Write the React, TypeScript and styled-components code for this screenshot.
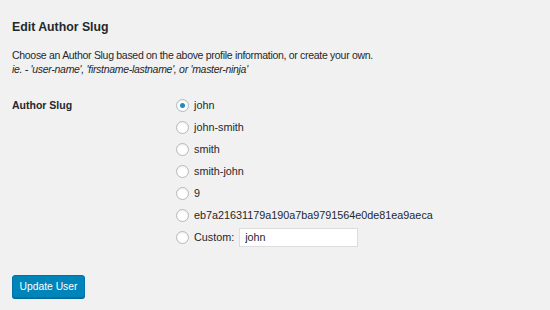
import React, { useState } from "react";
import styled, { createGlobalStyle } from "styled-components";

const GlobalStyle = createGlobalStyle`
  body {
    margin: 0;
    background: #f1f1f1;
    font-family: "Liberation Sans", Arial, sans-serif;
    color: #23282d;
  }
`;

const Page = styled.div`
  width: 550px;
  height: 310px;
  box-sizing: border-box;
  padding: 18px 12px 0;
`;

const Heading = styled.h2`
  margin: 0 0 12px;
  font-size: 12.3px;
  line-height: 18px;
  font-weight: 700;
`;

const Description = styled.p<{ $italic?: boolean }>`
  margin: 0;
  font-size: 10.5px;
  line-height: 14px;
  letter-spacing: -0.3px;
  font-style: ${({ $italic }) => ($italic ? "italic" : "normal")};
`;

const FieldRow = styled.div`
  display: grid;
  grid-template-columns: 164px 1fr;
  margin-top: 18px;
`;

const Label = styled.div`
  font-size: 10.5px;
  font-weight: 700;
  line-height: 22px;
`;

const Options = styled.div`
  display: flex;
  flex-direction: column;
`;

const Option = styled.label`
  display: flex;
  align-items: center;
  height: 22px;
  font-size: 10.8px;
  cursor: pointer;
`;

const Radio = styled.span<{ $checked: boolean }>`
  box-sizing: border-box;
  flex: none;
  width: 13px;
  height: 13px;
  margin-right: 5px;
  border: 1px solid #b4b9be;
  border-radius: 50%;
  background: #fff;
  box-shadow: inset 0 1px 2px rgba(0, 0, 0, 0.07);
  display: flex;
  align-items: center;
  justify-content: center;

  &::after {
    content: "";
    width: 5px;
    height: 5px;
    border-radius: 50%;
    background: #1e8cbe;
    display: ${({ $checked }) => ($checked ? "block" : "none")};
  }
`;

const CustomInput = styled.input`
  box-sizing: border-box;
  width: 119px;
  height: 19px;
  margin-left: 5px;
  padding: 0 5px;
  border: 1px solid #ddd;
  background: #fff;
  font-family: "Liberation Sans", Arial, sans-serif;
  font-size: 10.8px;
  color: #23282d;
  outline: none;
`;

const Button = styled.button`
  margin-top: 27px;
  box-sizing: border-box;
  height: 23px;
  width: 73px;
  padding: 0;
  background: #0085ba;
  border: 1px solid #0073aa;
  border-radius: 3px;
  box-shadow: 0 1px 0 #006799;
  color: #fff;
  font-family: "Liberation Sans", Arial, sans-serif;
  font-size: 10.3px;
  cursor: pointer;
`;

const slugs = [
  "john",
  "john-smith",
  "smith",
  "smith-john",
  "9",
  "eb7a21631179a190a7ba9791564e0de81ea9aeca",
];

export default function App() {
  const [selected, setSelected] = useState("john");
  const [custom, setCustom] = useState("john");

  return (
    <Page>
      <GlobalStyle />
      <Heading>Edit Author Slug</Heading>
      <Description>
        Choose an Author Slug based on the above profile information, or create your own.
      </Description>
      <Description $italic>
        ie. - 'user-name', 'firstname-lastname', or 'master-ninja'
      </Description>
      <FieldRow>
        <Label>Author Slug</Label>
        <Options>
          {slugs.map((slug) => (
            <Option key={slug} onClick={() => setSelected(slug)}>
              <Radio $checked={selected === slug} />
              {slug}
            </Option>
          ))}
          <Option onClick={() => setSelected("custom")}>
            <Radio $checked={selected === "custom"} />
            Custom:
            <CustomInput value={custom} onChange={(e) => setCustom(e.target.value)} />
          </Option>
        </Options>
      </FieldRow>
      <Button>Update User</Button>
    </Page>
  );
}
